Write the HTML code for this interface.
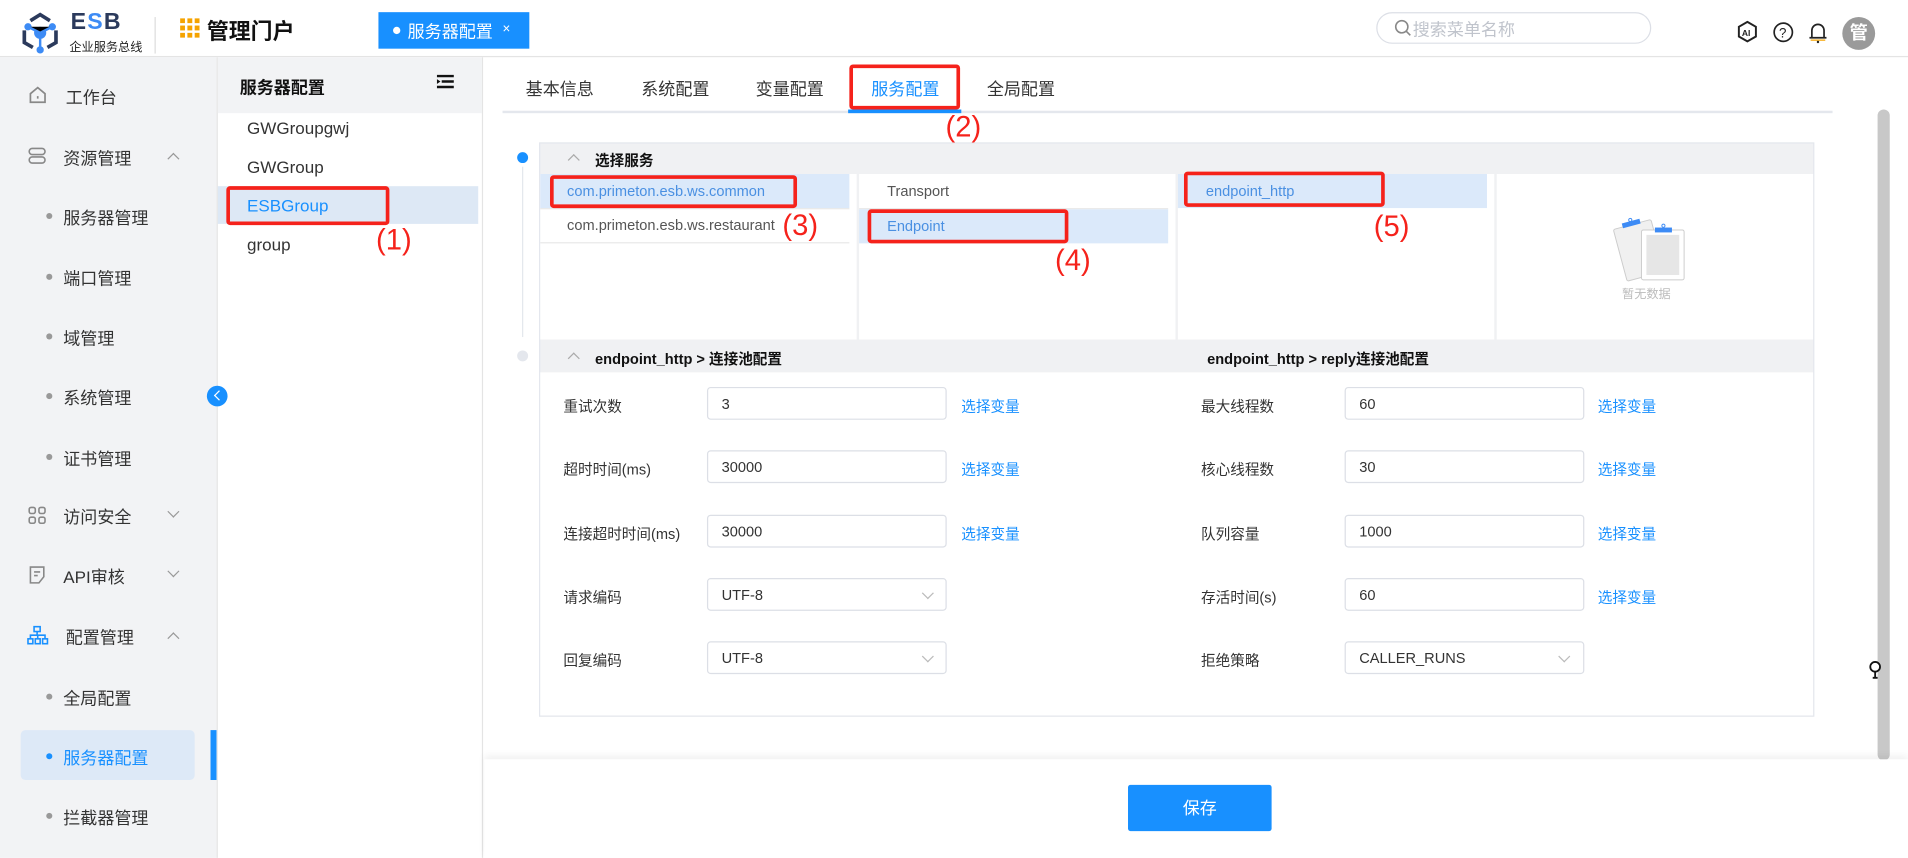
<!DOCTYPE html>
<html><head><meta charset="utf-8"><style>
*{box-sizing:border-box;margin:0;padding:0}
html,body{width:1908px;height:858px;overflow:hidden;background:#fff}
#w{position:absolute;left:0;top:0;width:1568px;height:705px;transform:scale(1.21684);transform-origin:0 0;font-family:"Liberation Sans","Noto Sans CJK SC",sans-serif;font-size:13px;color:#333}
.a{position:absolute}
.t{position:absolute;white-space:nowrap}
.red{position:absolute;border:3px solid #f5221b;border-radius:3px}
.rn{position:absolute;color:#f5221b;font-size:24px;white-space:nowrap}
.inp{position:absolute;width:197px;height:27px;border:1px solid #dcdfe6;border-radius:3px;padding:6px 11px;font-size:12px;color:#333}
.lnk{position:absolute;color:#1890ff;font-size:12px}
.lb{position:absolute;font-size:12px;color:#333}
.nav{position:absolute;left:52px;font-size:14px;color:#333}
.dot{position:absolute;left:38px;width:5px;height:5px;border-radius:50%;background:#999}
.chev{position:absolute;width:7px;height:7px;border-left:1.3px solid #999;border-top:1.3px solid #999}
</style></head><body><div id="w">
<div class="a" style="left:0;top:0;width:1568px;height:47px;border-bottom:1px solid #e4e4e4;background:#fff"></div>
<svg class="a" style="left:15px;top:9px" width="36" height="36" viewBox="0 0 36 36"><path d="M10 8 L18 3 L26 8" stroke="#2b3a5c" stroke-width="3" fill="none"/><path d="M5 16 V26 L12 30 M31 16 V26 L24 30" stroke="#2b3a5c" stroke-width="3" fill="none"/><circle cx="18" cy="18" r="5" fill="#3d8bf5"/><circle cx="8" cy="13" r="3" fill="#3d8bf5"/><circle cx="28" cy="13" r="3" fill="#3d8bf5"/><circle cx="18" cy="32" r="3" fill="#3d8bf5"/><path d="M8 13 L18 18 L28 13 M18 18 V32" stroke="#3d8bf5" stroke-width="2"/></svg>
<div class="t" style="left:58px;top:8px;font-size:19px;font-weight:bold;color:#2b3a5c;letter-spacing:1px">E<span style="color:#3d8bf5">S</span>B</div>
<div class="t" style="left:57px;top:30px;font-size:10px;color:#222">企业服务总线</div>
<div class="a" style="left:127px;top:14px;width:1px;height:30px;background:#ddd"></div>
<svg class="a" style="left:148px;top:15px" width="16" height="16"><g fill="#f5a300"><rect x="0" y="0" width="4" height="4"/><rect x="6" y="0" width="4" height="4"/><rect x="12" y="0" width="4" height="4"/><rect x="0" y="6" width="4" height="4"/><rect x="6" y="6" width="4" height="4"/><rect x="12" y="6" width="4" height="4"/><rect x="0" y="12" width="4" height="4"/><rect x="6" y="12" width="4" height="4"/><rect x="12" y="12" width="4" height="4"/></g></svg>
<div class="t" style="left:170px;top:12px;font-size:18px;font-weight:bold;color:#111">管理门户</div>
<div class="a" style="left:311px;top:10px;width:124px;height:30px;background:#1890ff"></div>
<div class="a" style="left:323px;top:22px;width:6px;height:6px;border-radius:50%;background:#fff"></div>
<div class="t" style="left:335px;top:16px;color:#fff;font-size:14px">服务器配置</div>
<div class="t" style="left:413px;top:18px;color:#fff;font-size:11px">×</div>
<div class="a" style="left:1131px;top:10px;width:226px;height:26px;border:1px solid #dcdfe6;border-radius:13px"></div>
<svg class="a" style="left:1146px;top:16px" width="14" height="14"><circle cx="6" cy="6" r="5" stroke="#888" stroke-width="1.3" fill="none"/><path d="M9.5 9.5 L13 13" stroke="#888" stroke-width="1.3"/></svg>
<div class="t" style="left:1161px;top:14px;color:#c0c4cc;font-size:14px">搜索菜单名称</div>
<svg class="a" style="left:1427px;top:17px" width="18" height="18" viewBox="0 0 18 18"><path d="M9 1 L16 5 V13 L9 17 L2 13 V5 Z" stroke="#222" stroke-width="1.6" fill="none"/><text x="4.5" y="12.5" font-size="7" font-weight="bold" font-family="Liberation Sans" fill="#222">AI</text></svg>
<svg class="a" style="left:1457px;top:18px" width="17" height="17"><circle cx="8.5" cy="8.5" r="7.5" stroke="#222" stroke-width="1.4" fill="none"/><text x="5" y="13" font-size="11" font-family="Liberation Sans" fill="#222">?</text></svg>
<svg class="a" style="left:1486px;top:17px" width="16" height="19"><path d="M3 14 V8 A5 5 0 0 1 13 8 V14 Z M1 14 H15" stroke="#222" stroke-width="1.4" fill="none"/><path d="M2 16 H14" stroke="#f5a300" stroke-width="1"/><circle cx="8" cy="17.5" r="1" fill="#222"/></svg>
<div class="a" style="left:1514px;top:14px;width:27px;height:27px;border-radius:50%;background:#9a9a9a;color:#fff;font-size:15px;text-align:center;line-height:27px;font-weight:bold">管</div>
<div class="a" style="left:0;top:47px;width:178px;height:658px;background:#f2f3f5"></div>
<svg class="a" style="left:23px;top:70px" width="16" height="16"><path d="M2 7 L8 2 L14 7 V14 H2 Z" stroke="#888" stroke-width="1.4" fill="none"/><path d="M8 9 V11" stroke="#888" stroke-width="1.4"/></svg>
<div class="nav" style="left:54px;top:70px">工作台</div>
<svg class="a" style="left:23px;top:120px" width="16" height="16"><rect x="1" y="2" width="13" height="5" rx="2.5" stroke="#888" stroke-width="1.3" fill="none"/><rect x="1" y="9" width="13" height="5" rx="2.5" stroke="#888" stroke-width="1.3" fill="none"/></svg>
<div class="nav" style="top:120px">资源管理</div><div class="chev" style="left:139px;top:127px;transform:rotate(45deg)"></div>
<div class="dot" style="top:175px"></div><div class="nav" style="top:169px">服务器管理</div>
<div class="dot" style="top:225px"></div><div class="nav" style="top:219px">端口管理</div>
<div class="dot" style="top:274px"></div><div class="nav" style="top:268px">域管理</div>
<div class="dot" style="top:323px"></div><div class="nav" style="top:317px">系统管理</div>
<div class="dot" style="top:373px"></div><div class="nav" style="top:367px">证书管理</div>
<svg class="a" style="left:23px;top:416px" width="15" height="15"><g stroke="#888" stroke-width="1.3" fill="none"><rect x="1" y="1" width="5" height="5" rx="1.5"/><rect x="9" y="1" width="5" height="5" rx="1.5"/><rect x="1" y="9" width="5" height="5" rx="1.5"/><rect x="9" y="9" width="5" height="5" rx="1.5"/></g></svg>
<div class="nav" style="top:415px">访问安全</div><div class="chev" style="left:139px;top:417px;transform:rotate(225deg)"></div>
<svg class="a" style="left:23px;top:465px" width="15" height="15"><g stroke="#888" stroke-width="1.3" fill="none"><path d="M2 1 H13 V9 L9 14 H2 Z"/><path d="M5 5 H10 M5 8 H8"/></g></svg>
<div class="nav" style="top:464px">API审核</div><div class="chev" style="left:139px;top:466px;transform:rotate(225deg)"></div>
<svg class="a" style="left:22px;top:514px" width="18" height="16"><g stroke="#1890ff" stroke-width="1.3" fill="none"><rect x="6" y="1" width="5" height="4"/><rect x="1" y="11" width="4" height="4"/><rect x="7" y="11" width="4" height="4"/><rect x="13" y="11" width="4" height="4"/><path d="M8.5 5 V8 M3 11 V8 H15 V11 M9 8 V11"/></g></svg>
<div class="nav" style="top:514px;left:54px">配置管理</div><div class="chev" style="left:139px;top:521px;transform:rotate(45deg)"></div>
<div class="dot" style="top:570px"></div><div class="nav" style="top:564px">全局配置</div>
<div class="a" style="left:17px;top:600px;width:143px;height:41px;background:#dde9f7;border-radius:4px"></div>
<div class="dot" style="top:619px;background:#1890ff"></div><div class="nav" style="top:613px;color:#1890ff">服务器配置</div>
<div class="a" style="left:173px;top:600px;width:5px;height:41px;background:#1890ff"></div>
<div class="dot" style="top:668px"></div><div class="nav" style="top:662px">拦截器管理</div>
<div class="a" style="left:178px;top:47px;width:219px;height:658px;background:#fff;border-right:1px solid #e4e4e4;border-left:1px solid #e4e4e4"></div>
<div class="a" style="left:179px;top:47px;width:217px;height:46px;background:#f2f3f5"></div>
<div class="t" style="left:197px;top:62px;font-weight:bold;font-size:14px;color:#111">服务器配置</div>
<svg class="a" style="left:359px;top:61px" width="14" height="12"><path d="M0 1.5 H14 M4 6 H14 M0 10.5 H14" stroke="#111" stroke-width="2"/><path d="M0 4 L3 6 L0 8Z" fill="#111"/></svg>
<div class="t" style="left:203px;top:97px;font-size:14px">GWGroupgwj</div>
<div class="t" style="left:203px;top:129px;font-size:14px">GWGroup</div>
<div class="a" style="left:179px;top:153px;width:214px;height:31px;background:#dde8f5"></div>
<div class="t" style="left:203px;top:161px;font-size:14px;color:#1890ff">ESBGroup</div>
<div class="t" style="left:203px;top:193px;font-size:14px">group</div>
<div class="a" style="left:170px;top:317px;width:17px;height:17px;border-radius:50%;background:#1890ff"></div>
<div class="chev" style="left:177px;top:322px;border-color:#fff;transform:rotate(-45deg);width:6px;height:6px"></div>
<div class="a" style="left:413px;top:91px;width:1093px;height:2px;background:#e4e7ed"></div>
<div class="t" style="left:432px;top:63px;font-size:14px">基本信息</div>
<div class="t" style="left:527px;top:63px;font-size:14px">系统配置</div>
<div class="t" style="left:621px;top:63px;font-size:14px">变量配置</div>
<div class="t" style="left:716px;top:63px;font-size:14px;color:#1890ff">服务配置</div>
<div class="a" style="left:697px;top:90px;width:93px;height:3px;background:#1890ff"></div>
<div class="t" style="left:811px;top:63px;font-size:14px">全局配置</div>
<div class="a" style="left:425px;top:125px;width:9px;height:9px;border-radius:50%;background:#1890ff"></div>
<div class="a" style="left:429px;top:137px;width:1px;height:140px;background:#e4e7ed"></div>
<div class="a" style="left:425px;top:288px;width:9px;height:9px;border-radius:50%;background:#e4e7ed"></div>
<div class="a" style="left:443px;top:117px;width:1048px;height:472px;border:1px solid #e4e7ed;background:#f0f1f3"></div>
<div class="chev" style="left:468px;top:128px;transform:rotate(45deg);border-color:#aaa"></div>
<div class="t" style="left:489px;top:123px;font-size:12px;font-weight:bold;color:#111">选择服务</div>
<div class="a" style="left:444px;top:143px;width:260px;height:136px;background:#fff"></div>
<div class="a" style="left:706px;top:143px;width:260px;height:136px;background:#fff"></div>
<div class="a" style="left:968px;top:143px;width:260px;height:136px;background:#fff"></div>
<div class="a" style="left:1230px;top:143px;width:260px;height:136px;background:#fff"></div>
<div class="a" style="left:444px;top:143px;width:254px;height:28px;background:#dbe9fa"></div>
<div class="a" style="left:444px;top:199px;width:254px;height:1px;background:#e8e8e8"></div>
<div class="a" style="left:444px;top:171px;width:254px;height:1px;background:#e8e8e8"></div>
<div class="t" style="left:466px;top:150px;font-size:12px;color:#4a90e2">com.primeton.esb.ws.common</div>
<div class="t" style="left:466px;top:178px;font-size:12px;color:#555">com.primeton.esb.ws.restaurant</div>
<div class="a" style="left:706px;top:171px;width:254px;height:1px;background:#e8e8e8"></div>
<div class="a" style="left:706px;top:172px;width:254px;height:28px;background:#dbe9fa"></div>
<div class="t" style="left:729px;top:150px;font-size:12px;color:#555">Transport</div>
<div class="t" style="left:729px;top:179px;font-size:12px;color:#4a90e2">Endpoint</div>
<div class="a" style="left:968px;top:143px;width:254px;height:28px;background:#dbe9fa"></div>
<div class="t" style="left:991px;top:150px;font-size:12px;color:#4a90e2">endpoint_http</div>
<svg class="a" style="left:1325px;top:176px" width="62" height="58" viewBox="0 0 62 58">
<g transform="rotate(-15 21 30)"><rect x="6" y="8" width="32" height="44" rx="1.5" fill="#f0f0f0" stroke="#ccc" stroke-width="0.8"/><rect x="14" y="5" width="15" height="4" fill="#3d8bf5"/><circle cx="21.5" cy="4" r="1.3" fill="none" stroke="#3d8bf5" stroke-width="0.8"/></g>
<rect x="24" y="13" width="35" height="41" rx="1.5" fill="#fff" stroke="#ccc" stroke-width="0.8"/>
<rect x="28" y="17" width="27" height="33" fill="#e6e6e6"/>
<rect x="35" y="11" width="14" height="4" fill="#3d8bf5"/><circle cx="42" cy="9.5" r="1.3" fill="none" stroke="#3d8bf5" stroke-width="0.8"/>
</svg>
<div class="t" style="left:1333px;top:233px;font-size:10px;color:#bbb">暂无数据</div>
<div class="chev" style="left:468px;top:291px;transform:rotate(45deg);border-color:#aaa"></div>
<div class="t" style="left:489px;top:286px;font-size:12px;font-weight:bold;color:#111">endpoint_http &gt; 连接池配置</div>
<div class="t" style="left:992px;top:286px;font-size:12px;font-weight:bold;color:#111">endpoint_http &gt; reply连接池配置</div>
<div class="a" style="left:444px;top:306px;width:1046px;height:282px;background:#fff"></div>
<div class="lb" style="left:463px;top:325px">重试次数</div><div class="inp" style="left:581px;top:318px">3</div><div class="lnk" style="left:790px;top:325px">选择变量</div>
<div class="lb" style="left:463px;top:377px">超时时间(ms)</div><div class="inp" style="left:581px;top:370px">30000</div><div class="lnk" style="left:790px;top:377px">选择变量</div>
<div class="lb" style="left:463px;top:430px">连接超时时间(ms)</div><div class="inp" style="left:581px;top:423px">30000</div><div class="lnk" style="left:790px;top:430px">选择变量</div>
<div class="lb" style="left:463px;top:482px">请求编码</div><div class="inp" style="left:581px;top:475px">UTF-8</div><div class="chev" style="left:759px;top:484px;transform:rotate(225deg);border-color:#bbb"></div>
<div class="lb" style="left:463px;top:534px">回复编码</div><div class="inp" style="left:581px;top:527px">UTF-8</div><div class="chev" style="left:759px;top:536px;transform:rotate(225deg);border-color:#bbb"></div>
<div class="lb" style="left:987px;top:325px">最大线程数</div><div class="inp" style="left:1105px;top:318px">60</div><div class="lnk" style="left:1313px;top:325px">选择变量</div>
<div class="lb" style="left:987px;top:377px">核心线程数</div><div class="inp" style="left:1105px;top:370px">30</div><div class="lnk" style="left:1313px;top:377px">选择变量</div>
<div class="lb" style="left:987px;top:430px">队列容量</div><div class="inp" style="left:1105px;top:423px">1000</div><div class="lnk" style="left:1313px;top:430px">选择变量</div>
<div class="lb" style="left:987px;top:482px">存活时间(s)</div><div class="inp" style="left:1105px;top:475px">60</div><div class="lnk" style="left:1313px;top:482px">选择变量</div>
<div class="lb" style="left:987px;top:534px">拒绝策略</div><div class="inp" style="left:1105px;top:527px">CALLER_RUNS</div><div class="chev" style="left:1282px;top:536px;transform:rotate(225deg);border-color:#bbb"></div>
<div class="a" style="left:1543px;top:90px;width:10px;height:535px;background:#c8c8c8;border-radius:5px"></div>
<svg class="a" style="left:1535px;top:543px" width="12" height="16"><circle cx="6" cy="5" r="4" stroke="#111" stroke-width="1.5" fill="#fff"/><path d="M6 9 V14 M4 14 H8" stroke="#111" stroke-width="1.5"/></svg>
<div class="a" style="left:398px;top:624px;width:1170px;height:81px;background:#fff;box-shadow:0 -3px 6px rgba(0,0,0,0.06)"></div>
<div class="a" style="left:927px;top:645px;width:118px;height:38px;background:#1890ff;border-radius:2px;color:#fff;font-size:14px;text-align:center;line-height:38px">保存</div>
<div class="red" style="left:186px;top:153px;width:134px;height:32px"></div><div class="rn" style="left:309px;top:184px">(1)</div>
<div class="red" style="left:698px;top:53px;width:91px;height:37px"></div><div class="rn" style="left:777px;top:91px">(2)</div>
<div class="red" style="left:452px;top:144px;width:203px;height:27px"></div><div class="rn" style="left:643px;top:172px">(3)</div>
<div class="red" style="left:713px;top:172px;width:165px;height:28px"></div><div class="rn" style="left:867px;top:201px">(4)</div>
<div class="red" style="left:973px;top:141px;width:165px;height:29px"></div><div class="rn" style="left:1129px;top:173px">(5)</div>
</div></body></html>
